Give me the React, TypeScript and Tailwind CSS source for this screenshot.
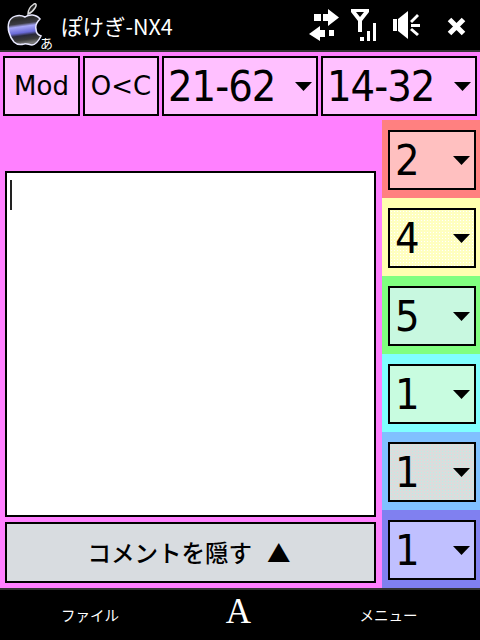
const jp = "font-['DejaVu_Sans','Noto_Sans_CJK_JP',sans-serif]";
const big = "font-['DejaVu_Sans_Condensed','DejaVu_Sans',sans-serif] text-[43px] leading-none text-black";

const Arrow = () => (
  <svg width="17" height="9" viewBox="0 0 17 9" className="shrink-0">
    <path d="M0 0H17L8.5 9Z" fill="#000" />
  </svg>
);

const TopSelect = ({ label, width }: { label: string; width: string }) => (
  <div className={`flex items-center justify-between h-[60px] border-2 border-black bg-[#ffc0ff] pl-[4px] pr-[4px] ${width}`}>
    <span className={`${big} tracking-[-1px]`}>{label}</span>
    <Arrow />
  </div>
);

const TopButton = ({ label, width }: { label: string; width: string }) => (
  <div className={`flex items-center justify-center h-[60px] border-2 border-black bg-[#ffc0ff] text-black text-[26px] ${width}`}>
    {label}
  </div>
);

const rows = [
  { value: '2', strip: 'bg-[#ff8080]', box: 'bg-[#ffc0c0]' },
  { value: '4', strip: 'bg-[#ffffb0]', box: 'bg-[#ffffc0] bg-[radial-gradient(#ffffff_0.8px,transparent_0.8px)] bg-[length:3px_3px]' },
  { value: '5', strip: 'bg-[#80ff80]', box: 'bg-[#c8f8e0] bg-[radial-gradient(#ecd8e8_0.7px,transparent_0.7px)] bg-[length:4px_4px]' },
  { value: '1', strip: 'bg-[#80ffff]', box: 'bg-[#c8fce0]' },
  { value: '1', strip: 'bg-[#80c0ff]', box: 'bg-[#dcdcdc] bg-[radial-gradient(#b8f0e8_0.7px,transparent_0.7px)] bg-[length:3px_3px]' },
  { value: '1', strip: 'bg-[#8080f0]', box: 'bg-[#c0c0ff]' },
];

const AppleLogo = () => (
  <svg width="36" height="44" viewBox="0 0 36 44" className="shrink-0">
    <defs>
      <linearGradient id="apple" x1="0" y1="0" x2="0.15" y2="1">
        <stop offset="0" stopColor="#555" />
        <stop offset="0.18" stopColor="#2a2a2a" />
        <stop offset="0.34" stopColor="#3c3c44" />
        <stop offset="0.44" stopColor="#a8a8f8" />
        <stop offset="0.64" stopColor="#6a6ad8" />
        <stop offset="0.74" stopColor="#2a2a3a" />
        <stop offset="0.88" stopColor="#3c3c3c" />
        <stop offset="1" stopColor="#777" />
      </linearGradient>
    </defs>
    <path d="M27 1C29 0 30 2 28 5C26 8 24 10 21 11C21 7 24 3 27 1Z" fill="#222" stroke="#ddd" strokeWidth="1.5" />
    <path
      d="M18 14C22 11 29 11 33 16C30 19 28 22 29 26C29 29 31 32 34 33C32 37 29 42 25 42C22 42 20 40 17 41C13 42 10 42 7 39C2 33 0 25 2 19C4 13 12 11 18 14Z"
      fill="url(#apple)"
      stroke="#e8e8ff"
      strokeWidth="1.5"
    />
  </svg>
);

const SyncIcon = () => (
  <svg width="30" height="32" viewBox="0 0 30 32" fill="#fff">
    <path d="M0 5H7V12H0ZM9 5H14V0L25 8.5L14 17V12H9Z" transform="translate(5 0)" />
    <path d="M0 25L11 17V21H16V28H11V32Z" />
    <path d="M20 21H25V27H20Z" />
  </svg>
);

const SignalIcon = () => (
  <svg width="25" height="33" viewBox="0 0 25 33" fill="#fff">
    <path d="M0 0H18V3L11 12V23H7V12L0 3ZM5 3L9 8L13 3Z" fillRule="evenodd" />
    <path d="M9 28H13V32H9ZM16 22H19V32H16ZM22 14H25V32H22Z" />
  </svg>
);

const SoundIcon = () => (
  <svg width="28" height="28" viewBox="0 0 28 28" fill="#fff">
    <path d="M1 8H5V20H1ZM6 8L16 0V28L6 20Z" />
    <path d="M18 10L25 3L27 5L20 12ZM19 13H28V16H19ZM20 17L27 23L25 25L18 19Z" />
  </svg>
);

const CloseIcon = () => (
  <svg width="19" height="19" viewBox="0 0 19 19">
    <path d="M2.5 2.5L16.5 16.5M16.5 2.5L2.5 16.5" stroke="#fff" strokeWidth="5" />
  </svg>
);

export default function App() {
  return (
    <div className={`w-[480px] h-[640px] flex flex-col bg-black overflow-hidden ${jp}`}>
      {/* title bar */}
      <div className="flex items-center h-[50px] shrink-0 pl-[7px] text-white">
        <AppleLogo />
        <span className="text-[13px] leading-none self-end mb-[1px] -ml-[3px] w-[14px] font-['Noto_Sans_CJK_JP',sans-serif]">あ</span>
        <span className="ml-[7px] mt-[2px] text-[21.5px] leading-none font-['Noto_Sans_CJK_JP',sans-serif]">ぽけぎ-NX4</span>
        <div className="ml-auto flex items-center">
          <SyncIcon />
          <div className="ml-[12px]"><SignalIcon /></div>
          <div className="ml-[16px]"><SoundIcon /></div>
          <div className="ml-[27px] mr-[14px] mt-[2px]"><CloseIcon /></div>
        </div>
      </div>
      <div className="h-[2px] shrink-0 bg-[#333333]" />

      {/* main */}
      <div className="flex-1 flex flex-col bg-[#ff80ff] min-h-0">
        <div className="flex gap-[3px] h-[68px] shrink-0 pt-[4px] pl-[3px]">
          <TopButton label="Mod" width="w-[77px]" />
          <TopButton label="O<C" width="w-[76px]" />
          <TopSelect label="21-62" width="w-[156px]" />
          <TopSelect label="14-32" width="w-[156px]" />
        </div>

        <div className="flex-1 flex min-h-0">
          <div className="w-[382px] shrink-0 flex flex-col pl-[5px] pr-[6px] pt-[51px] pb-[5px] gap-[5px]">
            <div className="flex-1 bg-white border-2 border-black pl-[3px] pt-[7px]">
              <div className="w-[2px] h-[30px] bg-[#222222]" />
            </div>
            <div className="h-[61px] shrink-0 flex items-center justify-center gap-[15px] pr-[3px] bg-[#d8dce0] border-2 border-black text-[23.5px] leading-none text-black font-['Noto_Sans_CJK_JP',sans-serif] font-medium">
              <span>コメントを隠す</span>
              <span>▲</span>
            </div>
          </div>

          <div className="flex-1 flex flex-col">
            {rows.map((row, i) => (
              <div key={i} className={`h-[78px] shrink-0 pl-[6px] pr-[4px] pt-[10px] ${row.strip}`}>
                <div className={`flex items-center justify-between h-[60px] border-2 border-black pl-[5px] pr-[4px] ${big} ${row.box}`}>
                  <span>{row.value}</span>
                  <Arrow />
                </div>
              </div>
            ))}
          </div>
        </div>
      </div>

      {/* soft key bar */}
      <div className="h-[2px] shrink-0 bg-[#333333]" />
      <div className="h-[50px] shrink-0 flex items-center text-white font-['Noto_Sans_CJK_JP',sans-serif] text-[14.5px]">
        <div className="w-[180px] text-center">ファイル</div>
        <div className="w-[117px] text-center text-[35px] leading-none -mt-[7px] font-['Liberation_Serif',serif]">A</div>
        <div className="w-[183px] text-center">メニュー</div>
      </div>
    </div>
  );
}
